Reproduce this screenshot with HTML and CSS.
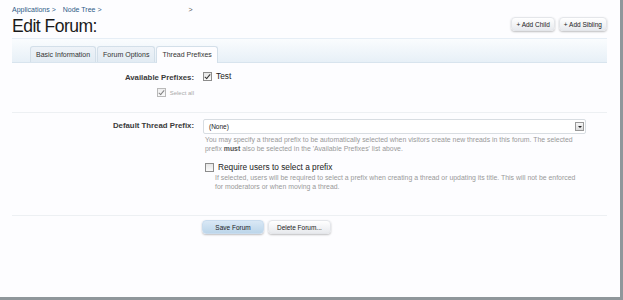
FILE: index.html
```html
<!DOCTYPE html>
<html>
<head>
<meta charset="utf-8">
<link rel="stylesheet" href="styles.css">
</head>
<body>
<div class="frame">
  <div class="page">
    <div class="crumbs">
      <a class="crumb">Applications &gt;</a>
      <a class="crumb">Node Tree &gt;</a>
      <span class="crumb-end">&gt;</span>
    </div>
    <div class="titlebar">
      <h1 class="title">Edit Forum:</h1>
      <div class="topbuttons">
        <span class="btn">+ Add Child</span>
        <span class="btn">+ Add Sibling</span>
      </div>
    </div>
    <div class="tabband">
      <ul class="tabs">
        <li class="tab">Basic Information</li>
        <li class="tab">Forum Options</li>
        <li class="tab active">Thread Prefixes</li>
      </ul>
    </div>

    <div class="section">
      <div class="row">
        <div class="label">Available Prefixes:</div>
        <div class="ctrl">
          <label class="check big"><span class="box checked"></span>Test</label>
        </div>
      </div>
      <div class="row selectall-row">
        <div class="label"><label class="check small"><span class="box checked dim"></span>Select all</label></div>
      </div>
    </div>

    <div class="section second">
      <div class="row">
        <div class="label">Default Thread Prefix:</div>
        <div class="ctrl wide">
          <div class="select"><span>(None)</span><span class="arrow"></span></div>
          <p class="hint">You may specify a thread prefix to be automatically selected when visitors create new threads in this forum. The selected prefix <b>must</b> also be selected in the 'Available Prefixes' list above.</p>
          <label class="check big req"><span class="box"></span>Require users to select a prefix</label>
          <p class="hint indent">If selected, users will be required to select a prefix when creating a thread or updating its title. This will not be enforced for moderators or when moving a thread.</p>
        </div>
      </div>
    </div>

    <div class="actions">
      <span class="btn primary">Save Forum</span>
      <span class="btn">Delete Forum...</span>
    </div>
  </div>
</div>
</body>
</html>
```
FILE: styles.css
```css
* { box-sizing: border-box; }
html, body { margin: 0; padding: 0; }
body {
  background: #fdfdff;
  font-family: "Liberation Sans", Arial, sans-serif;
  color: #222;
}
.frame {
  width: 623px;
  height: 300px;
  border-right: 3px solid #8f979b;
  border-bottom: 3px solid #8f979b;
  background: #fdfdff;
  overflow: hidden;
}
.page {
  padding: 0 13px 0 12px;
}
.crumbs {
  height: 17px;
  padding-top: 6px;
  font-size: 7px;
  color: #2f5b87;
  display: flex;
}
.crumb { margin-right: 7px; }
.crumb-end { margin-left: 80px; color: #555; }
.titlebar {
  display: flex;
  justify-content: space-between;
  align-items: flex-start;
  height: 21px;
}
.title {
  margin: 0;
  font-size: 17.5px;
  font-weight: normal;
  letter-spacing: -0.5px;
  line-height: 18px;
  color: #1a1a1a;
}
.topbuttons {
  display: flex;
  gap: 4px;
}
.btn {
  display: inline-block;
  font-size: 6.5px;
  line-height: 14px;
  height: 14px;
  padding: 0 4px;
  color: #222;
  border-radius: 4px;
  background: linear-gradient(#ffffff, #e8eaee);
  border: 1px solid #e4e6ea;
  box-shadow: 0 1px 2px rgba(0,0,0,0.25);
}
.tabband {
  border-top: 1px solid #e6eef6;
  background: linear-gradient(#fafcfe, #e7f0f7);
  height: 25px;
  border-bottom: 1px solid #d8e4ee;
  display: flex;
  align-items: flex-end;
  padding-left: 18px;
}
.tabs {
  list-style: none;
  margin: 0 0 -1px 0;
  padding: 0;
  display: flex;
}
.tab {
  font-size: 7px;
  color: #333;
  height: 16px;
  line-height: 15px;
  padding: 0 5px;
  margin-right: 1px;
  border: 1px solid #d3dfe9;
  border-bottom: none;
  border-radius: 3px 3px 0 0;
  background: linear-gradient(#eef3f8, #e2ebf3);
}
.tab.active {
  background: #fdfdff;
  height: 17px;
}
.section {
  border-bottom: 1px solid #edf0f3;
  padding-top: 8px;
  height: 50px;
}
.section.second {
  padding-top: 6px;
  height: 103px;
}
.row {
  display: flex;
}
.label {
  width: 182px;
  text-align: right;
  font-size: 7.8px;
  font-weight: bold;
  color: #3a3a3a;
  padding-top: 2px;
}
.ctrl { padding-left: 9px; }
.ctrl.wide { width: 392px; }
.check {
  display: flex;
  align-items: center;
  font-weight: normal;
}
.box {
  display: inline-block;
  width: 9px;
  height: 9px;
  border: 1px solid #8c8c8c;
  background: linear-gradient(#e6e6e6, #fafafa);
  margin-right: 4px;
  position: relative;
}
.box.checked::after {
  content: "";
  position: absolute;
  left: 2px;
  top: 0px;
  width: 2px;
  height: 5px;
  border: solid #333;
  border-width: 0 1.3px 1.3px 0;
  transform: rotate(40deg);
}
.box.dim { opacity: 0.6; }
.check.big {
  font-size: 8.3px;
  color: #222;
}
.selectall-row { margin-top: 4px; }
.check.small {
  justify-content: flex-end;
  font-size: 6px;
  color: #aaa;
}
.select {
  height: 15px;
  border: 1px solid #d8dde2;
  background: #fff;
  font-size: 6.5px;
  display: flex;
  align-items: center;
  justify-content: space-between;
  padding: 0 1px 0 5px;
  border-radius: 2px;
}
.arrow {
  width: 9px;
  height: 9px;
  border: 1px solid #999;
  background: linear-gradient(#f6f6f6, #dcdcdc);
  position: relative;
}
.arrow::after {
  content: "";
  position: absolute;
  left: 2px;
  top: 3px;
  border-left: 2px solid transparent;
  border-right: 2px solid transparent;
  border-top: 2px solid #222;
}
.hint {
  margin: 2px 0 0 2px;
  font-size: 6.9px;
  line-height: 8.5px;
  color: #999;
}
.hint b { color: #555; line-height: 1; }
.hint.indent { margin: 2px 8px 0 12px; }
.req { margin-top: 9px; margin-left: 2px; }
.actions {
  display: flex;
  gap: 4px;
  padding-left: 190px;
  padding-top: 4px;
}
.actions .btn { padding: 0 8px; }
.btn.primary {
  background: linear-gradient(#d9e8f5, #bcd6ea);
  border-color: #c9dcee;
  width: 62px;
  text-align: center;
}
```
